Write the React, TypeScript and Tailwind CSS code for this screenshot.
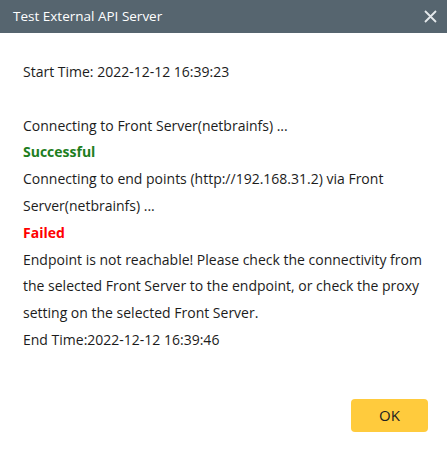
export default function App() {
  return (
    <div className="w-[447px] h-[455px] bg-white flex flex-col font-['Open_Sans',sans-serif]">
      <div className="h-[33px] bg-[#56656f] flex items-center justify-between pl-[13px] pr-[10px] shrink-0">
        <span className="text-[13.5px] text-white">Test External API Server</span>
        <svg width="13" height="13" viewBox="0 0 13 13" className="text-[#e4e8eb]">
          <path d="M1 1L12 12M12 1L1 12" stroke="currentColor" strokeWidth="1.8" />
        </svg>
      </div>
      <div className="pl-[23px] pr-[20px] pt-[26px] text-[14px] leading-[26.8px] text-[#1c1c1c]">
        <p>Start Time: 2022-12-12 16:39:23</p>
        <p>&nbsp;</p>
        <p>Connecting to Front Server(netbrainfs) ...</p>
        <p className="font-bold text-[#1e7e1e]">Successful</p>
        <p>Connecting to end points (http://192.168.31.2) via Front Server(netbrainfs) ...</p>
        <p className="font-bold text-[#ff0000]">Failed</p>
        <p>
          Endpoint is not reachable! Please check the connectivity from the selected Front Server to the
          endpoint, or check the proxy setting on the selected Front Server.
        </p>
        <p>End Time:2022-12-12 16:39:46</p>
      </div>
      <div className="mt-auto flex justify-end pr-[19px] pb-[23px]">
        <button className="w-[77px] h-[33px] rounded-[4px] bg-[#ffcb3d] text-[15px] text-[#222]">OK</button>
      </div>
    </div>
  )
}
